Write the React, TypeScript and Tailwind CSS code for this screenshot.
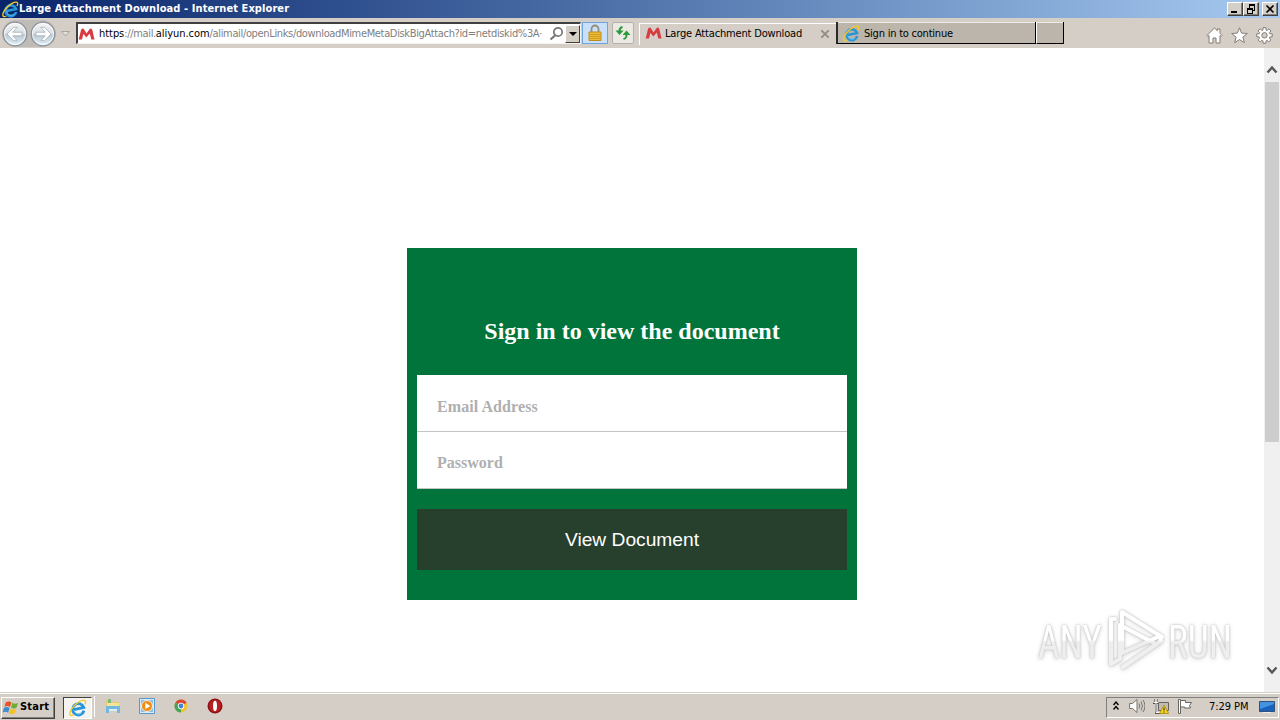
import type { ReactNode } from 'react';
import { clsx } from 'clsx';

const uiFont = "font-['DejaVu_Sans_Condensed','DejaVu_Sans',sans-serif] [font-stretch:condensed]";

interface IconProps {
  className?: string;
}

function IeIcon({ className }: IconProps) {
  return (
    <svg viewBox="0 0 18 18" className={className} fill="none">
      <path d="M14.500 12.800A5.700 5.700 0 1 1 15 9.700H5" stroke="#2795d8" strokeWidth="2.800" transform="rotate(-12 9 10)" />
      <path d="M5 11a4.500 4.500 0 0 0 8 2.500" stroke="#70cdf4" strokeWidth=".8" />
      <path d="M4.600 15.900C1 17.800-.5 15.500 2.300 10.500 5.500 5.300 12.500.2 15.500 1.300c1.400.5 1.300 2 .5 4" stroke="#f5ca28" strokeWidth="1.400" />
    </svg>
  );
}

function MailLogo({ className }: IconProps) {
  return (
    <svg viewBox="0 0 17 14" className={className}>
      <path d="M.7 12.500 3 3Q3.400 1.500 4.700 1.500q.8 0 1.300.8L8.500 6.500l3-4.300q.5-.7 1.300-.7 1.200 0 1.500 1.500l2.200 9.500h-3.200l-1.500-6L8.300 10.500 5.400 6.700 4 12.500Z" fill="#d93a3f" />
    </svg>
  );
}

function NavButton({ forward }: { forward?: boolean }) {
  return (
    <svg viewBox="0 0 26 26" className="size-[26px]">
      <defs>
        <linearGradient id="navFill" x1="0" y1="0" x2="0" y2="1">
          <stop offset="0" stopColor="#f5f5f5" />
          <stop offset=".48" stopColor="#d9dfe4" />
          <stop offset=".5" stopColor="#b9c6d1" />
          <stop offset="1" stopColor="#e2f1fa" />
        </linearGradient>
      </defs>
      <circle cx="13" cy="13" r="11.8" fill="url(#navFill)" stroke="#8c9298" strokeWidth="1.3" />
      <circle cx="13" cy="13" r="10.5" fill="none" stroke="#fff" strokeOpacity=".7" />
      <path
        d="M5 13 11.500 6.300h3.700l-4.500 4.900h9.300v3.600h-9.300l4.500 4.900h-3.700Z"
        transform={forward ? 'rotate(180 13 13)' : undefined}
        fill="#fff"
        stroke="#a2adb7"
        strokeWidth=".8"
      />
    </svg>
  );
}

function WindowButton({ label, children, className }: { label: string; children: ReactNode; className?: string }) {
  return (
    <button
      aria-label={label}
      className={clsx('h-[14px] w-4 border border-t-white border-l-white border-r-[#404040] border-b-[#404040] bg-[#d4d0c8] shadow-[inset_-1px_-1px_0_#808080]', className)}
    >
      <svg viewBox="0 0 14 12" className="h-3 w-[14px]" fill="none" stroke="#000" shapeRendering="crispEdges">
        {children}
      </svg>
    </button>
  );
}

function TitleBar() {
  return (
    <div className="flex h-[18px] items-center bg-linear-to-r from-[#0a246a] to-[#a6caf0] pr-0.5 pl-0.5">
      <IeIcon className="size-[17px]" />
      <span className="flex-1 text-[11px] leading-[18px] font-bold tracking-[0.09px] whitespace-nowrap text-white">
        Large Attachment Download - Internet Explorer
      </span>
      <WindowButton label="Minimize">
        <path d="M3 9h6" strokeWidth="2" />
      </WindowButton>
      <WindowButton label="Restore">
        <path d="M5 2h6M3 5.500h6" strokeWidth="2" />
        <path d="M5.500 1v4M10.500 1v6.500H9M3.500 5v5.500h5V5" />
      </WindowButton>
      <WindowButton label="Close" className="ml-[3px]">
        <path d="m3.500 2.500 7 7m0-7-7 7" strokeWidth="1.700" shapeRendering="auto" />
      </WindowButton>
    </div>
  );
}

function AddressBar() {
  return (
    <div className="flex h-[22px] w-[505px] items-center border border-t-2 border-l-2 border-[#f5f3ee] border-t-[#404040] border-l-[#404040] bg-white">
      <MailLogo className="h-[14px] w-[17px]" />
      <div className="mt-0.5 ml-1 w-[447px] shrink-0 text-[11px] tracking-[-0.345px] whitespace-nowrap text-[#808080]">
        <span className="tracking-[-0.05px] text-black">https</span>://mail.
        <span className="tracking-[-0.05px] text-black">aliyun.com</span>
        /alimail/openLinks/downloadMimeMetaDiskBigAttach?id=netdiskid%3A·
      </div>
      <svg viewBox="0 0 16 16" className="ml-[3px] size-4 shrink-0" fill="none" stroke="#777">
        <circle cx="9" cy="6" r="4.200" strokeWidth="1.700" />
        <path d="m6 9.500-4.500 4" strokeWidth="2.200" />
      </svg>
      <button
        aria-label="Show history"
        className="ml-auto flex h-[18px] w-[15px] shrink-0 items-center justify-center border border-t-white border-l-white border-r-[#404040] border-b-[#404040] bg-[#d4d0c8]"
      >
        <svg viewBox="0 0 8 4" className="h-1 w-2">
          <path d="M0 0h8L4 4Z" />
        </svg>
      </button>
    </div>
  );
}

function Toolbar() {
  return (
    <div className="flex h-[30px] bg-[#d4cec6]">
      <div className="mt-[2px] ml-[2px] flex h-[27px] w-[54px] items-center justify-between rounded-full bg-[#bfbcb7]">
        <NavButton />
        <NavButton forward />
      </div>
      <svg viewBox="0 0 9 6" className="mt-[13px] ml-[5px] h-1.5 w-[9px]">
        <path d="M.5.500h8l-4 4.500Z" fill="#e2ded8" stroke="#aaa59e" />
      </svg>
      <div className="mt-1 ml-[6px] flex">
        <AddressBar />
        <div className="ml-px flex h-[22px] w-[26px] items-center justify-center border border-[#6fa4df] bg-[#c9e0fa]">
          <svg viewBox="0 0 16 18" className="h-[18px] w-4" fill="none">
            <path d="M4.500 9V5a3.500 3.500 0 0 1 7 0v4" stroke="#948c78" strokeWidth="1.800" />
            <path d="M2 8h12v8.500H2Z" fill="#f0bd32" stroke="#bd8c20" />
            <path d="M3 10.500h10M3 12.500h10M3 14.500h10" stroke="#cf9a20" />
          </svg>
        </div>
        <div className="ml-1 flex h-[22px] w-[22px] items-center justify-center rounded-xs border border-[#b4b1ac] bg-[#ece9e4]">
          <svg viewBox="0 0 16 16" className="size-4" fill="none" stroke="#2d9b3a" strokeWidth="2">
            <path d="M7.500 2C5 2.500 4.500 3.500 4.500 6M8.500 14c2.500-.5 3-1.500 3-4.500" />
            <path d="M.5 5.500h8l-4 4.500ZM7.500 10h8l-4-4.500Z" fill="#2d9b3a" stroke="none" />
          </svg>
        </div>
      </div>

      <div className="mt-[5px] ml-[5px] flex h-[22px] w-[197px] items-center border-t border-l border-white pl-[5px]">
        <MailLogo className="mb-[3px] h-[14px] w-[17px]" />
        <span className="ml-[3px] text-[11px] tracking-[-0.17px] whitespace-nowrap">Large Attachment Download</span>
        <svg viewBox="0 0 8 8" className="mr-[7px] mb-0.5 ml-auto size-2 shrink-0" stroke="#8d8984" strokeWidth="1.700">
          <path d="m0 0 8 8M8 0 0 8" />
        </svg>
      </div>
      <div className="mt-1 flex h-[22px] w-[200px] items-center border-r border-b border-l-2 border-black border-l-[#2c2a28] bg-[#bbb5ac] pt-px pl-[5px] shadow-[inset_0_1px_0_#eeeae4]">
        <IeIcon className="size-[17px]" />
        <span className="mt-0.5 ml-[4px] text-[11px] tracking-[-0.22px] whitespace-nowrap">Sign in to continue</span>
      </div>
      <div className="mt-1 h-[22px] w-7 border-r border-b border-l border-black border-l-white bg-[#bbb5ac] shadow-[inset_0_1px_0_#eeeae4]" />

      <div className="mt-[9px] mr-[7px] ml-auto flex gap-2">
        <svg viewBox="0 0 17 17" className="size-[17px]" fill="#fff" stroke="#807c77">
          <path d="M.8 8.500 8.500 1l2.800 2.700V2H14v4.300l2.200 2.200-1 1-1.200-1V16h-4v-5H7v5H3V8.500l-1.200 1Z" />
        </svg>
        <svg viewBox="0 0 17 17" className="size-[17px]" fill="#fff" stroke="#807c77">
          <path d="m8.500.8 2.100 5.300 5.700.4-4.400 3.600 1.400 5.500-4.800-3-4.800 3 1.400-5.500L.7 6.500l5.700-.4Z" />
        </svg>
        <svg viewBox="0 0 17 17" className="size-[17px]" fill="#fff" stroke="#807c77">
          <path d="M7 .7h3v2.200l1.200.5 1.600-1.600 2.200 2.100-1.600 1.600.5 1.300h2.300v3.100h-2.300l-.5 1.300 1.600 1.600-2.200 2.100-1.600-1.500-1.200.5v2.300H7v-2.300l-1.200-.5-1.600 1.500L2 12.800l1.600-1.600-.5-1.300H.8V6.800h2.300l.5-1.300L2 3.900l2.200-2.100 1.600 1.600L7 2.900Z" />
          <circle cx="8.500" cy="8.300" r="2.700" fill="#d4cec6" />
        </svg>
      </div>
    </div>
  );
}

function SignInForm() {
  return (
    <form className="h-[352px] w-[450px] bg-[#00743a] px-2.5 pt-[69px] text-center">
      <h1 className="font-['Liberation_Serif',serif] text-[24px] leading-7 font-bold text-white">Sign in to view the document</h1>
      <div className="mt-[30px] h-[114px] bg-white font-['Liberation_Serif',serif] text-base font-bold">
        <input
          type="text"
          placeholder="Email Address"
          className="block h-[57px] w-full border-b border-[#c4c4c4] px-5 pt-2 tracking-[0.08px] outline-none placeholder:text-[#afafaf]"
        />
        <input
          type="password"
          placeholder="Password"
          className="block h-[57px] w-full border-b border-[#c4c4c4] px-5 pt-[5px] outline-none placeholder:text-[#afafaf]"
        />
      </div>
      <button type="button" className="mt-5 h-[61px] w-full bg-[#273f2d] pt-0.5 font-['Liberation_Sans',sans-serif] text-[19.200px] text-white">
        View Document
      </button>
    </form>
  );
}

function ScrollArrow({ down }: { down?: boolean }) {
  return (
    <svg viewBox="0 0 12 9" className={clsx('h-[9px] w-3', down && 'rotate-180')} fill="none" stroke="#555" strokeWidth="2.400">
      <path d="m1.500 7.500 4.500-5 4.500 5" />
    </svg>
  );
}

function Scrollbar() {
  return (
    <div className="flex w-4 flex-col items-center bg-[#f0f0f0] pt-[17px] pb-[17px]">
      <ScrollArrow />
      <div className="mt-2 h-[360px] w-[14px] bg-[#cdcdcd]" />
      <div className="mt-auto flex">
        <ScrollArrow down />
      </div>
    </div>
  );
}

function Watermark() {
  return (
    <svg
      viewBox="0 0 210 70"
      className="absolute top-[557px] left-[1030px] h-[70px] w-[210px] overflow-visible [filter:drop-shadow(0_0_1px_#bbb)_drop-shadow(0_1px_2px_#ddd)]"
      fill="none"
    >
      <defs>
        <linearGradient id="markFill" x1="0" y1="0" x2="0" y2="70" gradientUnits="userSpaceOnUse">
          <stop offset=".5" stopColor="#fff" />
          <stop offset=".53" stopColor="#ededed" />
          <stop offset="1" stopColor="#f2f2f2" />
        </linearGradient>
      </defs>
      <g fill="url(#markFill)" className="font-['Roboto',sans-serif] text-[47px] leading-none">
        <text x="8" y="53" textLength="64" lengthAdjust="spacingAndGlyphs">ANY</text>
        <text x="138" y="53" textLength="64" lengthAdjust="spacingAndGlyphs">RUN</text>
      </g>
      <g stroke="url(#markFill)" strokeWidth="4" strokeLinejoin="round" strokeLinecap="round">
        <path d="M92 47V7l40 25" />
        <path d="M85 14h-4v45l9-5V20l34 18" />
        <path d="M92 48l38-17 1 5-38 26" />
      </g>
    </svg>
  );
}

function QuickLaunch() {
  return (
    <div className="flex items-center gap-[18px]">
      <svg viewBox="0 0 16 16" className="size-4">
        <path d="M1 3q0-1 1-1h4l1 2h7v4H1Z" fill="#e7cd67" />
        <path d="M2 5h12v8H2Z" fill="#f5e59a" />
        <path d="M3 1h3v4H3Z" fill="#7ebc7c" />
        <path d="M1 8h14v7h-3v-4H4v4H1Z" fill="#73b9df" />
        <path d="M4 11h8v2H4Z" fill="#d6effa" />
      </svg>
      <svg viewBox="0 0 16 16" className="size-4">
        <path d="M.5.500h15v15H.5Z" fill="#d9ebf8" stroke="#5599ce" />
        <path d="M2 2h12v12H2Z" fill="#94bddf" />
        <circle cx="8" cy="8" r="5.500" fill="#ef8d12" stroke="#fff" strokeWidth=".8" />
        <path d="m6.300 4.800 5 3.200-5 3.200Z" fill="#fff" />
      </svg>
      <svg viewBox="0 0 16 16" className="size-4">
        <circle cx="8" cy="8" r="6.500" fill="#efc533" />
        <path d="M8 8 2.370 4.750A6.500 6.500 0 0 1 13.630 4.750Z" fill="#d94738" />
        <path d="M8 8 2.370 4.750A6.500 6.500 0 0 0 8 14.500Z" fill="#42a458" />
        <circle cx="8" cy="8" r="3.200" fill="#fff" />
        <circle cx="8" cy="8" r="2.400" fill="#4a80d0" />
      </svg>
      <svg viewBox="0 0 16 16" className="size-4">
        <circle cx="8" cy="8" r="7.500" fill="#b81d20" />
        <circle cx="8" cy="8" r="6.700" fill="none" stroke="#7d1115" />
        <ellipse cx="8" cy="8" rx="2" ry="5.200" fill="#fff" />
      </svg>
    </div>
  );
}

function Tray() {
  return (
    <div className="mt-px ml-auto flex h-[21px] w-[173px] items-center border border-white border-t-[#808080] border-l-[#808080] pl-[6px]">
      <svg viewBox="0 0 6 10" className="mb-[3px] h-2.5 w-1.5" fill="none" stroke="#000" strokeWidth="1.400">
        <path d="m.500 4 2.500-3 2.500 3M.5 8.500 3 5.500l2.500 3" />
      </svg>
      <svg viewBox="0 0 16 16" className="mb-0.5 ml-[10px] size-4" fill="none" stroke="#77736d">
        <path d="M.6 5.500h3L8 1.500v13l-4.400-4h-3Z" fill="#fff" />
        <path d="M10 5.500q1.500 2.500 0 5M12 3.500q3 4.500 0 9M14 2q4 6 0 12" />
      </svg>
      <svg viewBox="0 0 16 16" className="mb-0.5 ml-2 size-4">
        <path d="M5.500 4.500h10v8h-10Z" fill="#c1bdb5" stroke="#66635e" />
        <path d="M1 1v4h4V1M3 5v10h5" fill="none" stroke="#56534e" strokeWidth="2" />
        <path d="M.8 1v3.500h4.400V1M3 5v9.500h4" stroke="#fff" fill="none" />
        <path d="m11 7 4.700 8.500H6.300Z" fill="#f2d321" stroke="#a28400" strokeWidth=".7" />
        <path d="M11 9.500v3m0 1v1" stroke="#222" />
      </svg>
      <svg viewBox="0 0 16 16" className="mb-0.5 ml-2 size-4" fill="#fff" stroke="#68645f">
        <path d="M1.500 1.500h2v14h-2Z" />
        <path d="M3.500 2.500h5v2h6l-2 3 1 2.500h-6V9h-4Z" />
      </svg>
      <span className="ml-4 text-[11px] tracking-[-0.05px] whitespace-nowrap">7:29 PM</span>
      <svg viewBox="0 0 16 14" className="mr-[3px] ml-auto h-[14px] w-4">
        <path d="M.5 1.500h15v10H.5Z" fill="#1862bc" stroke="#31517c" />
        <path d="M1 2h14v2L1 9Z" fill="#4294e0" />
        <path d="M4 12.500h8" stroke="#eee" />
      </svg>
    </div>
  );
}

function Taskbar() {
  return (
    <div className="flex h-7 items-center border-t border-[#d4d0c8] bg-[#d4cec6] pr-px pl-px shadow-[inset_0_1px_0_#fff]">
      <button className="mt-0.5 flex h-[22px] w-[54px] items-center border border-t-white border-l-white border-r-[#404040] border-b-[#404040] pl-px shadow-[inset_-1px_-1px_0_#808080]">
        <svg viewBox="0 0 17 16" className="size-4 shrink-0">
          <path d="M3 2q3-2 6 0L7.500 7q-3-2-6 0Z" fill="#e85324" />
          <path d="M10 2.500q3 2 6 0L14.500 7.500q-3 2-6 0Z" fill="#70ad36" />
          <path d="M1 8q3-2 6 0l-1.500 5q-3-2-6 0Z" fill="#3a8dd0" />
          <path d="M8 8.500q3 2 6 0L12.500 13.500q-3 2-6 0Z" fill="#f5bf29" />
        </svg>
        <span className="ml-px text-[11px] font-bold tracking-[0.2px]">Start</span>
      </button>
      <div className="mt-0.5 ml-2 flex h-[22px] w-[29px] items-center border border-white border-t-[#404040] border-l-[#404040] bg-[#f5f3ef] pl-[5px]">
        <IeIcon className="size-[18px]" />
      </div>
      <div className="ml-0.5 h-[21px] w-px bg-white" />
      <div className="mb-px ml-[10px]">
        <QuickLaunch />
      </div>
      <Tray />
    </div>
  );
}

export default function App() {
  return (
    <div className={clsx('flex h-[720px] w-[1280px] flex-col overflow-hidden bg-white text-black', uiFont)}>
      <TitleBar />
      <Toolbar />
      <main className="relative flex flex-1 bg-white">
        <div className="flex flex-1 justify-center pt-[200px]">
          <SignInForm />
        </div>
        <Scrollbar />
        <Watermark />
      </main>
      <Taskbar />
    </div>
  );
}
